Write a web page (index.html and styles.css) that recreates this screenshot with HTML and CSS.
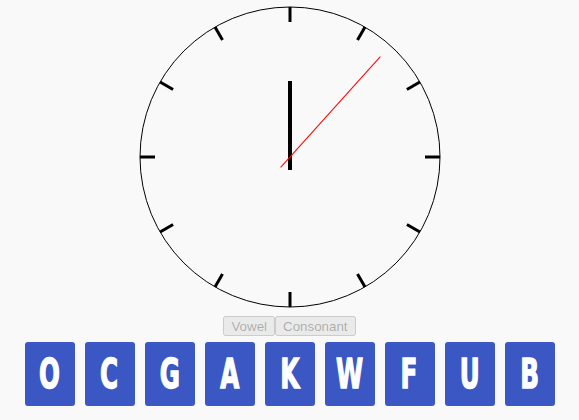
FILE: index.html
```html
<!DOCTYPE html>
<html>
<head>
<meta charset="utf-8">
<link rel="stylesheet" href="styles.css">
</head>
<body>
<div class="app">
  <svg class="clock" width="302" height="302" viewBox="-151 -151 302 302">
    <circle cx="0" cy="0" r="150" fill="none" stroke="#000" stroke-width="1"/>
    <g stroke="#000" stroke-width="3">
      <line x1="0" y1="-135" x2="0" y2="-150" transform="rotate(0)"/>
      <line x1="0" y1="-135" x2="0" y2="-150" transform="rotate(30)"/>
      <line x1="0" y1="-135" x2="0" y2="-150" transform="rotate(60)"/>
      <line x1="0" y1="-135" x2="0" y2="-150" transform="rotate(90)"/>
      <line x1="0" y1="-135" x2="0" y2="-150" transform="rotate(120)"/>
      <line x1="0" y1="-135" x2="0" y2="-150" transform="rotate(150)"/>
      <line x1="0" y1="-135" x2="0" y2="-150" transform="rotate(180)"/>
      <line x1="0" y1="-135" x2="0" y2="-150" transform="rotate(210)"/>
      <line x1="0" y1="-135" x2="0" y2="-150" transform="rotate(240)"/>
      <line x1="0" y1="-135" x2="0" y2="-150" transform="rotate(270)"/>
      <line x1="0" y1="-135" x2="0" y2="-150" transform="rotate(300)"/>
      <line x1="0" y1="-135" x2="0" y2="-150" transform="rotate(330)"/>
    </g>
    <line x1="0" y1="13" x2="0" y2="-76" stroke="#000" stroke-width="4"/>
    <line x1="0" y1="14" x2="0" y2="-135" stroke="#f00" stroke-width="1" transform="rotate(42)"/>
  </svg>
  <div class="controls"><button disabled>Vowel</button><button disabled>Consonant</button></div>
  <div class="tiles">
    <div class="tile"><span class="letter">O</span></div>
    <div class="tile"><span class="letter">C</span></div>
    <div class="tile"><span class="letter">G</span></div>
    <div class="tile"><span class="letter">A</span></div>
    <div class="tile"><span class="letter">K</span></div>
    <div class="tile"><span class="letter">W</span></div>
    <div class="tile"><span class="letter">F</span></div>
    <div class="tile"><span class="letter">U</span></div>
    <div class="tile"><span class="letter">B</span></div>
  </div>
</div>
</body>
</html>
```
FILE: styles.css
```css
html, body {
  margin: 0;
  padding: 0;
  background: #f9f9f9;
}
.app {
  display: flex;
  flex-direction: column;
  align-items: center;
  padding-top: 6px;
}
.clock {
  display: block;
}
.controls {
  margin-top: 8px;
  display: flex;
  height: 20px;
}
.controls button {
  font-family: "Liberation Sans", Arial, sans-serif;
  font-size: 13.33px;
  height: 20px;
  padding: 1px 6px;
  margin: 0;
}
.tiles {
  margin-top: 6px;
  display: flex;
  gap: 10px;
}
.tile {
  width: 50px;
  height: 64px;
  background: #3a57c4;
  border-radius: 3px;
  color: #fff;
  display: flex;
  align-items: center;
  justify-content: center;
}
.letter {
  display: inline-block;
  font-family: "DejaVu Sans", sans-serif;
  font-weight: bold;
  font-size: 41px;
  line-height: 1;
  -webkit-text-stroke: 1.5px #fff;
  transform: scaleX(0.6);
}
```
